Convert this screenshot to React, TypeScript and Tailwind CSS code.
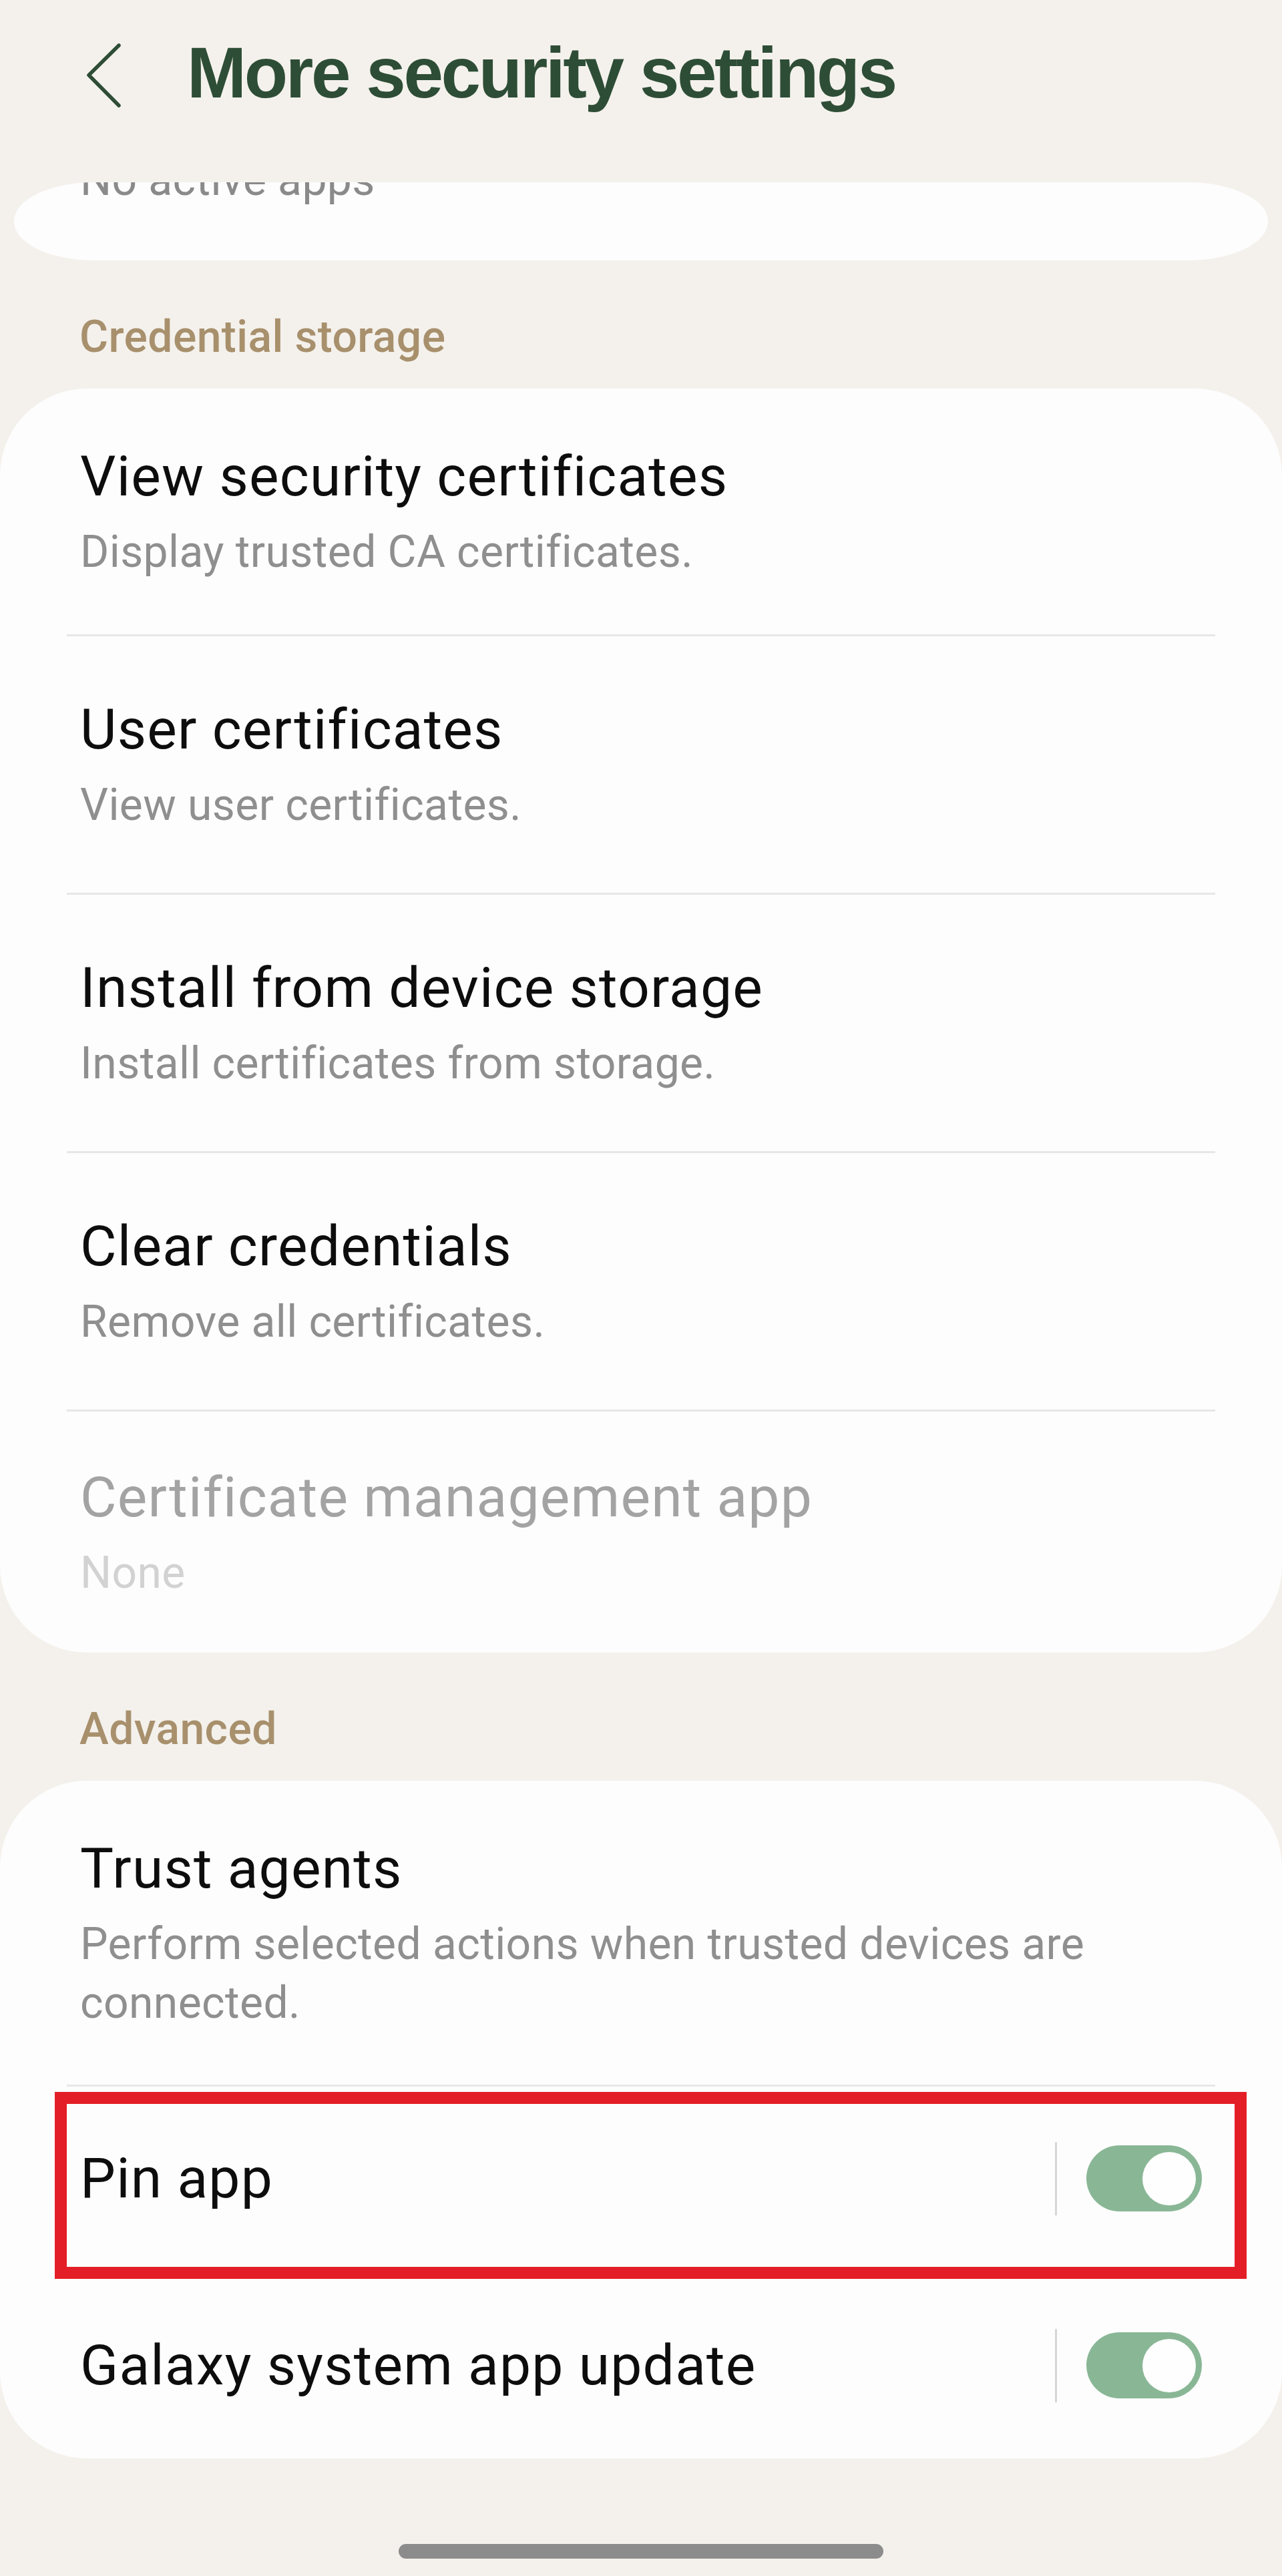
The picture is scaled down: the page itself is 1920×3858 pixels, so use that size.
import React from 'react';

type Item = {
  title: string;
  sub?: string;
  pad: string;
  disabled?: boolean;
};

const credentialItems: Item[] = [
  { title: 'View security certificates', sub: 'Display trusted CA certificates.', pad: 'pt-[82px] pb-[78px]' },
  { title: 'User certificates', sub: 'View user certificates.', pad: 'pt-[90px] pb-[86px]' },
  { title: 'Install from device storage', sub: 'Install certificates from storage.', pad: 'pt-[90px] pb-[86px]' },
  { title: 'Clear credentials', sub: 'Remove all certificates.', pad: 'pt-[90px] pb-[86px]' },
  { title: 'Certificate management app', sub: 'None', pad: 'pt-[79px] pb-[74px]', disabled: true },
];

function Divider() {
  return <div className="mx-[100px] h-[3px] bg-[#e7e7e6]" />;
}

function SectionLabel({ children }: { children: React.ReactNode }) {
  return (
    <div className="pl-[119px] pt-[70px] pb-[32px] text-[66px] leading-[90px] tracking-[0.4px] font-medium text-[#a8906d]">
      {children}
    </div>
  );
}

function SettingRow({ item }: { item: Item }) {
  return (
    <div className={`pl-[120px] pr-[120px] ${item.pad}`}>
      <div className={`text-[84px] leading-[100px] tracking-[1.2px] ${item.disabled ? 'text-[#a3a3a3]' : 'text-[#0d0d0d]'}`}>
        {item.title}
      </div>
      {item.sub && (
        <div className={`mt-[18px] text-[66px] leading-[90px] tracking-[0.4px] ${item.disabled ? 'text-[#d2d2d2]' : 'text-[#8f8f8f]'}`}>
          {item.sub}
        </div>
      )}
    </div>
  );
}

function Toggle() {
  return (
    <div className="flex items-center">
      <div className="w-[3px] h-[110px] bg-[#d6d6d6]" />
      <div className="ml-[44px] w-[173px] h-[99px] rounded-full bg-[#89b796] flex items-center justify-end pr-[9px]">
        <div className="w-[80px] h-[80px] rounded-full bg-[#fefefe]" />
      </div>
    </div>
  );
}

function SwitchRow({ title, height, highlight }: { title: string; height: string; highlight?: boolean }) {
  return (
    <div className={`relative flex items-center justify-between pl-[120px] pr-[120px] ${height}`}>
      <div className="text-[84px] leading-[100px] tracking-[1.2px] text-[#0d0d0d]">{title}</div>
      <Toggle />
      {highlight && (
        <div className="absolute z-10 top-[8px] left-[82px] right-[53px] bottom-[-13px] border-[18px] border-[#e41e26]" />
      )}
    </div>
  );
}

export default function App() {
  return (
    <div
      className="w-[1920px] h-[3858px] bg-[#f4f1ec] flex flex-col overflow-hidden"
      style={{ fontFamily: 'Roboto, "Noto Sans", sans-serif' }}
    >
      {/* Header */}
      <div className="h-[273px] shrink-0 flex items-start pt-[56px] pl-[126px]">
        <svg className="mt-[7px] shrink-0" width="60" height="100" viewBox="0 0 60 100" fill="none">
          <path d="M52 5 L7 49.5 L52 95" stroke="#2e4d36" strokeWidth="5.5" strokeLinecap="round" strokeLinejoin="round" />
        </svg>
        <h1
          className="ml-[94px] text-[107px] leading-none font-bold tracking-[-3.4px] text-[#2e4d36]"
          style={{ fontFamily: '"Liberation Sans", Arial, sans-serif' }}
        >
          More security settings
        </h1>
      </div>

      {/* Partially scrolled card */}
      <div className="mx-[21px] h-[117px] shrink-0 bg-[#fdfdfd] rounded-[120px_/_58px] overflow-hidden">
        <div className="mt-[-48px] pl-[99px] text-[66px] leading-[90px] tracking-[0.4px] text-[#8a8a8a]">No active apps</div>
      </div>

      <SectionLabel>Credential storage</SectionLabel>

      <div className="shrink-0 bg-[#fdfdfd] rounded-[130px]">
        {credentialItems.map((item, i) => (
          <React.Fragment key={item.title}>
            {i > 0 && <Divider />}
            <SettingRow item={item} />
          </React.Fragment>
        ))}
      </div>

      <SectionLabel>Advanced</SectionLabel>

      <div className="shrink-0 bg-[#fdfdfd] rounded-[130px]">
        <div className="pl-[120px] pr-[120px] pt-[82px] pb-[78px]">
          <div className="text-[84px] leading-[100px] tracking-[1.2px] text-[#0d0d0d]">Trust agents</div>
          <div className="mt-[19px] text-[66px] leading-[88px] tracking-[0.4px] text-[#8f8f8f]">
            Perform selected actions when trusted devices are connected.
          </div>
        </div>
        <Divider />
        <SwitchRow title="Pin app" height="h-[275px]" highlight />
        <Divider />
        <SwitchRow title="Galaxy system app update" height="h-[279px]" />
      </div>

      {/* Gesture bar */}
      <div className="mt-[128px] mx-auto w-[726px] h-[22px] shrink-0 rounded-full bg-[#8c8c8c]" />
    </div>
  );
}
